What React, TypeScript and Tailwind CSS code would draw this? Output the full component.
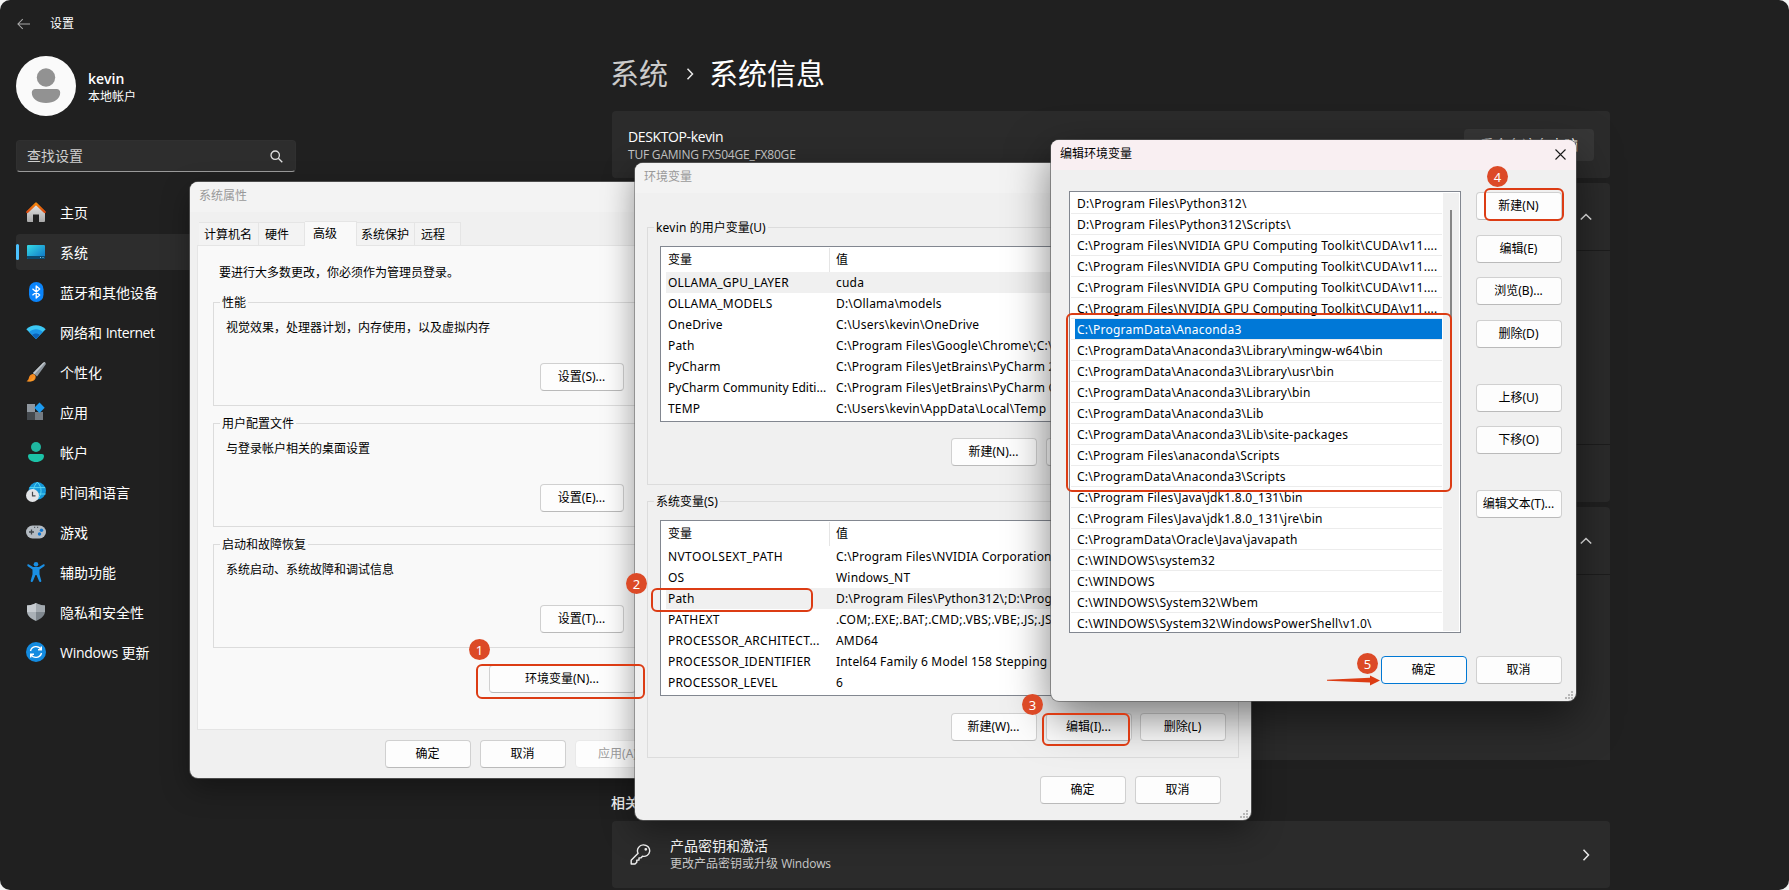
import React from 'react';

interface NavItem {
  label: React.ReactNode;
  icon: React.ReactNode;
  active?: boolean;
}

interface Variable {
  name: string;
  value: string;
  selected?: boolean;
  tracking?: string;
}

const HomeIcon = () => (
  <svg width="20" height="20" viewBox="0 0 20 20">
    <defs>
      <linearGradient id="home" x1="0" y1="0" x2="0" y2="1">
        <stop offset="0" stopColor="#e6e6e6" />
        <stop offset="1" stopColor="#a9a9a9" />
      </linearGradient>
      <linearGradient id="roof" x1="0" y1="0" x2="0" y2="1">
        <stop offset="0" stopColor="#f5870c" />
        <stop offset="1" stopColor="#d9480f" />
      </linearGradient>
    </defs>
    <path d="M1 9.5 10 1.5l9 8V19a1 1 0 0 1-1 1h-5v-7.5H7V20H2a1 1 0 0 1-1-1z" fill="url(#home)" />
    <path d="M1.300 10 10 1.600l8.700 8.400" fill="none" stroke="url(#roof)" strokeWidth="2.400" strokeLinecap="round" strokeLinejoin="round" />
  </svg>
);

const SystemIcon = () => (
  <svg width="20" height="20" viewBox="0 0 20 20">
    <defs>
      <linearGradient id="sys" x1="0" y1="0" x2="1" y2="1">
        <stop offset="0" stopColor="#35dbe6" />
        <stop offset="1" stopColor="#0d6fc4" />
      </linearGradient>
    </defs>
    <rect x="1" y="3" width="18" height="14" rx="1" fill="url(#sys)" />
    <path d="M1 14h18v2a1 1 0 0 1-1 1H2a1 1 0 0 1-1-1z" fill="#0b4a6f" />
    <path d="M14 15.5h1M16.5 15.5h1" stroke="#7cc9ee" />
  </svg>
);

const BluetoothIcon = () => (
  <svg width="20" height="20" viewBox="0 0 20 20">
    <rect x="3" y="0" width="14.5" height="20" rx="7.2" fill="#0a84fa" />
    <path d="m6.5 6.8 7.2 6.2L10.2 16V4l3.5 3-7.2 6.2" fill="none" stroke="#fff" strokeWidth="1.3" strokeLinejoin="round" />
  </svg>
);

const NetworkIcon = () => (
  <svg width="20" height="20" viewBox="0 0 20 20">
    <path d="M0.3 7.3C5.6 1.9 14.4 1.9 19.7 7.3L10 17z" fill="#3cc8f4" />
    <path d="M3.2 10.1C7 6.4 13 6.4 16.8 10.1L10 17z" fill="#1b93e6" />
    <path d="M6.1 13.1C8.3 11.1 11.7 11.1 13.9 13.1L10 17z" fill="#0c62b8" />
  </svg>
);

const BrushIcon = () => (
  <svg width="20" height="20" viewBox="0 0 20 20">
    <path d="M19.2.5c1 .8.6 1.8.1 2.6L11 14.4 7 11 16.9 1C17.6.3 18.5 0 19.2.5z" fill="#8d969e" />
    <path d="M16.9 1C17.6.3 18.5 0 19.2.5L8.4 12.2 7 11z" fill="#c3c9cd" />
    <path d="M6 12.2c1.700-.7 3.600.7 3.700 2.600C9.800 18.500 5.500 20.500.500 19.200c1.700-.9 2-2 2.500-3.700.4-1.500 1.300-2.700 3-3.300z" fill="#f58a1f" />
    <path d="M.5 19.200c3-.2 5.500-1 8.400-6-.1 5-3.900 7.300-8.400 6z" fill="#fbb03b" opacity=".5" />
  </svg>
);

const AppsIcon = () => (
  <svg width="20" height="20" viewBox="0 0 20 20">
    <rect x="1" y="2" width="8" height="8" fill="#8f979f" />
    <rect x="1" y="10" width="8" height="8" fill="#43484d" />
    <rect x="9" y="10" width="8" height="8" fill="#747b82" />
    <path d="m13.500.500 5.200 5.200-5.200 5.200-5.200-5.200z" fill="#1c9bf0" />
  </svg>
);

const AccountIcon = () => (
  <svg width="20" height="20" viewBox="0 0 20 20">
    <circle cx="10" cy="5" r="5" fill="#1fb7a0" />
    <path d="M4 12h12a2 2 0 0 1 2 2c0 3.500-3.500 6-8 6s-8-2.500-8-6a2 2 0 0 1 2-2z" fill="#1cc3a8" />
  </svg>
);

const TimeIcon = () => (
  <svg width="20" height="20" viewBox="0 0 20 20">
    <circle cx="11.300" cy="8.800" r="8.700" fill="#1597d8" />
    <path d="M11.300.100c-5 5-5 12.400 0 17.400M11.300.100c5 5 5 12.400 0 17.400M3.500 5.600h15.600M3 12h16.500" fill="none" stroke="#58d6f2" strokeWidth="1" />
    <circle cx="6.500" cy="13.500" r="6.500" fill="#e3e5e7" />
    <path d="M6.500 9.800v4h3" fill="none" stroke="#44494d" strokeWidth="1.200" />
  </svg>
);

const GamingIcon = () => (
  <svg width="20" height="20" viewBox="0 0 20 20">
    <rect x="0" y="3.500" width="20" height="13" rx="6.500" fill="#b4bbc2" />
    <path d="M5.500 7.500v5M3 10h5" stroke="#3f454b" strokeWidth="1.300" />
    <circle cx="15.500" cy="8.300" r="1.700" fill="#1076d0" />
    <circle cx="13.500" cy="12" r="1.700" fill="#1076d0" />
    <path d="M8 5.300h1.200M11 5.300h1.200" stroke="#3f454b" />
  </svg>
);

const AccessibilityIcon = () => (
  <svg width="20" height="20" viewBox="0 0 20 20" fill="#1a8fe3">
    <circle cx="10" cy="2.300" r="2.300" />
    <path d="M2.600 2.300 7 5h6l4.400-2.700c1.300-.4 1.700 1.200.8 1.900L13.500 7.500v4.700l1.800 6.600c.2 1.400-1.600 1.700-2.200.4L10.500 13h-1l-2.600 6.200c-.6 1.300-2.400 1-2.200-.4l1.800-6.600V7.500L1.800 4.200C.900 3.500 1.300 1.900 2.600 2.300z" />
  </svg>
);

const ShieldIcon = () => (
  <svg width="20" height="20" viewBox="0 0 20 20">
    <path d="M10 1c2.500 1.700 5.500 2.400 9 2.500v5.800c0 4.200-3.400 7.500-9 9.700z" fill="#7f878e" />
    <path d="M10 1C7.500 2.700 4.500 3.400 1 3.500v5.800C1 13.500 4.400 16.800 10 19z" fill="#aab1b7" />
    <path d="M1 3.500C4.500 3.400 7.500 2.700 10 1v9H1z" fill="#c6cbd0" />
    <path d="M19 3.500C15.500 3.400 12.500 2.700 10 1v9h9z" fill="#a2a9af" />
  </svg>
);

const UpdateIcon = () => (
  <svg width="20" height="20" viewBox="0 0 20 20">
    <circle cx="10" cy="10" r="10" fill="#138be0" />
    <path d="M4.500 9A5.700 5.700 0 0 1 15 7.500M15.500 11A5.700 5.700 0 0 1 5 12.500M15.300 4.500v3.300H12M4.700 15.500v-3.300H8" fill="none" stroke="#fff" strokeWidth="1.400" />
  </svg>
);

const navItems: NavItem[] = [
  { label: '主页', icon: <HomeIcon /> },
  { label: '系统', icon: <SystemIcon />, active: true },
  { label: '蓝牙和其他设备', icon: <BluetoothIcon /> },
  { label: <>网络和 <span className="tracking-[-0.45px]">Internet</span></>, icon: <NetworkIcon /> },
  { label: '个性化', icon: <BrushIcon /> },
  { label: '应用', icon: <AppsIcon /> },
  { label: '帐户', icon: <AccountIcon /> },
  { label: '时间和语言', icon: <TimeIcon /> },
  { label: '游戏', icon: <GamingIcon /> },
  { label: '辅助功能', icon: <AccessibilityIcon /> },
  { label: '隐私和安全性', icon: <ShieldIcon /> },
  { label: <><span className="tracking-[-0.25px]">Windows</span> 更新</>, icon: <UpdateIcon /> },
];

const userVariables: Variable[] = [
  { name: 'OLLAMA_GPU_LAYER', value: 'cuda', selected: true },
  { name: 'OLLAMA_MODELS', value: 'D:\\Ollama\\models' },
  { name: 'OneDrive', value: 'C:\\Users\\kevin\\OneDrive' },
  { name: 'Path', value: 'C:\\Program Files\\Google\\Chrome\\;C:\\' },
  { name: 'PyCharm', value: 'C:\\Program Files\\JetBrains\\PyCharm 2' },
  { name: 'PyCharm Community Editi...', value: 'C:\\Program Files\\JetBrains\\PyCharm C', tracking: 'tracking-[0.03px]' },
  { name: 'TEMP', value: 'C:\\Users\\kevin\\AppData\\Local\\Temp' },
];

const systemVariables: Variable[] = [
  { name: 'NVTOOLSEXT_PATH', value: 'C:\\Program Files\\NVIDIA Corporation', tracking: 'tracking-[0.4px]' },
  { name: 'OS', value: 'Windows_NT' },
  { name: 'Path', value: 'D:\\Program Files\\Python312\\;D:\\Progr', selected: true },
  { name: 'PATHEXT', value: '.COM;.EXE;.BAT;.CMD;.VBS;.VBE;.JS;.JSE', tracking: 'tracking-[0.35px]' },
  { name: 'PROCESSOR_ARCHITECT...', value: 'AMD64', tracking: 'tracking-[0.27px]' },
  { name: 'PROCESSOR_IDENTIFIER', value: 'Intel64 Family 6 Model 158 Stepping', tracking: 'tracking-[0.28px]' },
  { name: 'PROCESSOR_LEVEL', value: '6' },
];

const paths = [
  'D:\\Program Files\\Python312\\',
  'D:\\Program Files\\Python312\\Scripts\\',
  'C:\\Program Files\\NVIDIA GPU Computing Toolkit\\CUDA\\v11....',
  'C:\\Program Files\\NVIDIA GPU Computing Toolkit\\CUDA\\v11....',
  'C:\\Program Files\\NVIDIA GPU Computing Toolkit\\CUDA\\v11....',
  'C:\\Program Files\\NVIDIA GPU Computing Toolkit\\CUDA\\v11....',
  'C:\\ProgramData\\Anaconda3',
  'C:\\ProgramData\\Anaconda3\\Library\\mingw-w64\\bin',
  'C:\\ProgramData\\Anaconda3\\Library\\usr\\bin',
  'C:\\ProgramData\\Anaconda3\\Library\\bin',
  'C:\\ProgramData\\Anaconda3\\Lib',
  'C:\\ProgramData\\Anaconda3\\Lib\\site-packages',
  'C:\\Program Files\\anaconda\\Scripts',
  'C:\\ProgramData\\Anaconda3\\Scripts',
  'C:\\Program Files\\Java\\jdk1.8.0_131\\bin',
  'C:\\Program Files\\Java\\jdk1.8.0_131\\jre\\bin',
  'C:\\ProgramData\\Oracle\\Java\\javapath',
  'C:\\WINDOWS\\system32',
  'C:\\WINDOWS',
  'C:\\WINDOWS\\System32\\Wbem',
  'C:\\WINDOWS\\System32\\WindowsPowerShell\\v1.0\\',
];
const selectedPath = 6;

interface ButtonProps {
  children?: React.ReactNode;
  className?: string;
  variant?: 'normal' | 'default' | 'disabled';
}

const Button: React.FC<ButtonProps> = ({ children, className = 'w-[86px]', variant = 'normal' }) => {
  const look = {
    normal: 'border-[#d0d0d0] border-b-[#bababa] text-black',
    default: 'border-[#0078d4] text-black',
    disabled: 'border-[#e9e9e9] text-[#9d9d9d]',
  }[variant];
  return (
    <button className={`h-7 shrink-0 rounded border bg-[#fdfdfd] pr-px text-center whitespace-nowrap ${look} ${className}`}>{children}</button>
  );
};

const Grip = () => (
  <svg className="absolute right-[3px] bottom-[2px]" width="8" height="8" viewBox="0 0 8 8" fill="#b8b8b8">
    <path d="M6 0h2v2H6zM3 3h2v2H3zM6 3h2v2H6zM0 6h2v2H0zM3 6h2v2H3zM6 6h2v2H6z" />
  </svg>
);

const Chevron = ({ className = '' }: { className?: string }) => (
  <svg className={className} width="12" height="12" viewBox="0 0 12 12" fill="none" stroke="#e8e8e8" strokeWidth="1.5">
    <path d="m3.500.800 5 5.200-5 5.200" />
  </svg>
);

const Sidebar = () => (
  <aside className="w-[610px] shrink-0 pl-4">
    <div className="flex h-12 items-center">
      <svg width="13" height="12" viewBox="0 0 14 12" fill="none" stroke="#a8a8a8" strokeWidth="1.100" className="ml-px">
        <path d="M14 6H1M6.200.700 1 6l5.200 5.300" />
      </svg>
      <span className="ml-5 text-xs text-white">设置</span>
    </div>
    <div className="mt-2 flex items-center">
      <svg width="60" height="60" viewBox="0 0 60 60">
        <circle cx="30" cy="30" r="30" fill="#fafafa" />
        <circle cx="30" cy="21.500" r="9.200" fill="#929292" />
        <path d="M19.500 33h21a3.500 3.500 0 0 1 3.700 3.700c0 6.500-6.500 10.300-14.200 10.300s-14.200-3.800-14.200-10.300A3.500 3.500 0 0 1 19.500 33z" fill="#929292" />
      </svg>
      <div className="ml-3 pt-0.5 text-white">
        <div className="text-sm leading-[18px] font-semibold">kevin</div>
        <div className="text-xs leading-[17px]">本地帐户</div>
      </div>
    </div>
    <div className="mt-6 flex h-8 w-[280px] items-center justify-between rounded border border-[#303030] border-b-[#9a9a9a] bg-[#2d2d2d] pr-3 pl-2.5">
      <span className="text-sm text-[#cfcfcf]">查找设置</span>
      <svg width="13" height="13" viewBox="0 0 13 13" fill="none" stroke="#e0e0e0" strokeWidth="1.300">
        <circle cx="5.200" cy="5.200" r="4.200" />
        <path d="m8.300 8.300 4 4" />
      </svg>
    </div>
    <nav className="mt-[22px] flex w-[280px] flex-col gap-1">
      {navItems.map((item, i) => (
        <div key={i} className={`flex h-9 items-center rounded text-sm text-white ${item.active ? 'bg-[#2d2d2d]' : ''}`}>
          <span className={`h-4 w-[3px] rounded-full ${item.active ? 'bg-[#4cc2ff]' : ''}`} />
          <span className="ml-[7px]">{item.icon}</span>
          <span className="ml-[14px] pt-0.5">{item.label}</span>
        </div>
      ))}
    </nav>
  </aside>
);

const SystemInfoPage = () => (
  <main className="w-[1000px] pt-14 text-white">
    <h1 className="flex h-9 items-center text-[29px]">
      <span className="text-[#cbcbcb]">系统</span>
      <Chevron className="mr-[13px] ml-4" />
      <span>系统信息</span>
    </h1>
    <div className="ml-0.5">
      <div className="mt-[19px] flex h-[67px] items-center justify-between rounded bg-[#2b2b2b] px-4">
        <div>
          <div className="text-sm leading-5 tracking-[-0.38px]">DESKTOP-kevin</div>
          <div className="text-xs leading-4 tracking-[-0.2px] text-[#c8c8c8]">TUF GAMING FX504GE_FX80GE</div>
        </div>
        <div className="flex h-8 w-[130px] items-center justify-center rounded bg-[#373737] text-sm">重命名这台电脑</div>
      </div>
      <div className="mt-[5px] h-[319px] rounded bg-[#2b2b2b]">
        <div className="flex h-[68px] items-center justify-end border-b border-[#1d1d1d] pr-[18px]">
          <Chevron className="-rotate-90" />
        </div>
        <div className="h-[194px] border-b border-[#1d1d1d]" />
      </div>
      <div className="mt-[5px] h-[253px] rounded-t bg-[#2b2b2b]">
        <div className="flex h-[68px] items-center justify-end border-b border-[#1d1d1d] pr-[18px]">
          <Chevron className="-rotate-90" />
        </div>
      </div>
    </div>
    <h2 className="mt-[34px] ml-px text-sm leading-[18px] font-medium">相关设置</h2>
    <div className="mt-[9px] ml-0.5 flex h-[67px] items-center rounded bg-[#2b2b2b] pr-[18px] pl-[18px]">
      <svg width="21" height="21" viewBox="0 0 21 21" fill="none" stroke="#f0f0f0" strokeWidth="1.400" strokeLinejoin="round">
        <path d="M14.200 1a5.700 5.700 0 1 1-1.700 11.200l-1.600 1.700H9v2.200H6.800v2.200L5 20H1.200v-3.700l6.900-7A5.800 5.800 0 0 1 14.200 1z" />
        <circle cx="15.800" cy="5.300" r=".7" fill="#f0f0f0" />
      </svg>
      <div className="ml-[19px] flex-1 pt-px">
        <div className="text-sm leading-[18px]">产品密钥和激活</div>
        <div className="text-xs leading-[18px] text-[#c8c8c8]">更改产品密钥或升级 <span className="tracking-[-0.2px]">Windows</span></div>
      </div>
      <Chevron />
    </div>
  </main>
);

interface SettingsGroupProps {
  title: string;
  text: string;
  button: string;
}

const SettingsGroup: React.FC<SettingsGroupProps> = ({ title, text, button }) => (
  <fieldset className="mb-2 ml-[15px] h-[113px] w-[432px] border border-[#dcdcdc]">
    <legend className="ml-1.5 h-[18px] px-[2px] leading-5">{title}</legend>
    <p className="mt-2 ml-3 leading-[18px]">{text}</p>
    <div className="mt-[26px] mr-5 flex justify-end">
      <Button className="w-[84px]">{button}</Button>
    </div>
  </fieldset>
);

const Tab = ({ label, className }: { label: string; className: string }) => (
  <div className={`h-[23px] border border-b-0 border-l-0 border-[#e5e5e5] bg-[#f3f3f3] leading-[23px] ${className}`}>{label}</div>
);

const SystemProperties = () => (
  <section className="absolute top-[182px] left-[190px] h-[596px] w-[480px] overflow-hidden rounded-lg bg-[#f0f0f0] shadow-[0_0_0_1px_rgba(110,110,110,0.6),0_10px_28px_rgba(0,0,0,0.35)]">
    <div className="h-[30px] bg-[#f3f3f3] pl-[9px] leading-7 text-[#999999]">系统属性</div>
    <div className="mt-[9px] flex h-6 items-end pl-[9px]">
      <Tab label="计算机名" className="w-[60px] border-l pl-[5px]" />
      <Tab label="硬件" className="w-[46px] pl-[6px]" />
      <div className="relative z-10 -mb-px h-[25px] w-[52px] border border-b-0 border-l-0 border-[#e5e5e5] bg-[#f9f9f9] pl-[8px] leading-[23px]">高级</div>
      <Tab label="系统保护" className="w-[58px] pl-[4px]" />
      <Tab label="远程" className="w-[46px] pl-[6px]" />
    </div>
    <div className="ml-[7px] h-[485px] border border-[#e5e5e5] bg-[#f9f9f9]">
      <p className="mt-[18px] mb-[11px] ml-[21px] leading-[18px]">要进行大多数更改，你必须作为管理员登录。</p>
      <SettingsGroup title="性能" text="视觉效果，处理器计划，内存使用，以及虚拟内存" button="设置(S)..." />
      <SettingsGroup title="用户配置文件" text="与登录帐户相关的桌面设置" button="设置(E)..." />
      <SettingsGroup title="启动和故障恢复" text="系统启动、系统故障和调试信息" button="设置(T)..." />
      <Button className="mt-[9px] ml-[291px] w-[147px]">环境变量(N)...</Button>
    </div>
    <div className="mt-[10px] ml-[195px] flex gap-[9px]">
      <Button>确定</Button>
      <Button>取消</Button>
      <Button variant="disabled" className="w-[86px] pr-1">应用(A)</Button>
    </div>
  </section>
);

const VariableTable = ({ variables }: { variables: Variable[] }) => (
  <div className="mt-[10px] ml-3 h-44 w-[566px] overflow-hidden border border-[#828790] bg-white">
    <div className="flex h-[25px] pt-px">
      <span className="w-[169px] border-r border-[#e5e5e5] pl-[7px] leading-6">变量</span>
      <span className="pl-[6px] leading-6">值</span>
    </div>
    {variables.map((v) => (
      <div key={v.name} className={`ml-[5px] flex h-[21px] pl-[2px] leading-[21px] whitespace-nowrap ${v.selected ? 'bg-[#f0f0f0]' : ''}`}>
        <span className={`w-[168px] shrink-0 ${v.tracking ?? 'tracking-[0.19px]'}`}>{v.name}</span>
        <span className={v.name === 'PATHEXT' ? 'tracking-[0.29px]' : 'tracking-[0.19px]'}>{v.value}</span>
      </div>
    ))}
  </div>
);

const EnvironmentVariables = () => (
  <section className="absolute top-[163px] left-[635px] h-[657px] w-[616px] overflow-hidden rounded-lg bg-[#f0f0f0] shadow-[0_0_0_1px_rgba(110,110,110,0.6),0_10px_32px_rgba(0,0,0,0.4)]">
    <div className="h-[30px] bg-[#f3f3f3] pl-[9px] leading-7 text-[#999999]">环境变量</div>
    <fieldset className="mt-[25px] ml-3 h-[267px] w-[592px] border border-[#dcdcdc]">
      <legend className="ml-1.5 h-[18px] px-[2px] leading-5"><span className="tracking-[0.2px]">kevin</span> 的用户变量(U)</legend>
      <VariableTable variables={userVariables} />
      <div className="mt-4 ml-[303px] flex gap-[9px]">
        <Button>新建(N)...</Button>
        <Button />
      </div>
    </fieldset>
    <fieldset className="mt-[7px] ml-3 h-[266px] w-[592px] border border-[#dcdcdc]">
      <legend className="ml-1.5 h-[18px] px-[2px] leading-5">系统变量(S)</legend>
      <VariableTable variables={systemVariables} />
      <div className="mt-[17px] ml-[303px] flex gap-[9px]">
        <Button>新建(W)...</Button>
        <Button>编辑(I)...</Button>
        <Button className="-ml-px w-[86px]">删除(L)</Button>
      </div>
    </fieldset>
    <div className="mt-[18px] mr-[30px] flex justify-end gap-[9px]">
      <Button>确定</Button>
      <Button>取消</Button>
    </div>
    <Grip />
  </section>
);

const EditVariable = () => (
  <section className="absolute top-[140px] left-[1051px] h-[561px] w-[525px] overflow-hidden rounded-lg bg-[#f0f0f0] shadow-[0_0_0_1px_rgba(90,90,90,0.6),0_16px_44px_rgba(0,0,0,0.5)]">
    <div className="flex h-[30px] items-center justify-between bg-[#f9eff2] pr-[10px] pb-0.5 pl-[9px]">
      <span>编辑环境变量</span>
      <svg width="11" height="11" viewBox="0 0 11 11" stroke="#1a1a1a" strokeWidth="1.100">
        <path d="m.500.500 10 10M10.500.500l-10 10" />
      </svg>
    </div>
    <div className="mt-[21px] ml-[18px] flex">
      <div className="flex h-[442px] w-[392px] overflow-hidden border border-[#828790] bg-white p-px">
        <div className="w-[371px] shrink-0">
          {paths.map((path, i) => (
            <div key={i} className="h-[21px] border-b border-[#ececec] pl-1 leading-[22px] tracking-[0.24px] whitespace-nowrap">
              <div className={`h-5 pl-[2px] ${i === selectedPath ? 'bg-[#0078d7] text-white' : ''}`}>{path}</div>
            </div>
          ))}
        </div>
        <div className="ml-px w-4 bg-[#f0f0f0] pt-[17px] pl-[7px]">
          <div className="h-[270px] w-[2px] bg-[#868686]" />
        </div>
      </div>
      <div className="mt-px ml-[15px] flex flex-col">
        <Button>新建(N)</Button>
        <Button className="mt-[15px] w-[86px]">编辑(E)</Button>
        <Button className="mt-[14px] w-[86px]">浏览(B)...</Button>
        <Button className="mt-[15px] w-[86px]">删除(D)</Button>
        <Button className="mt-[36px] w-[86px]">上移(U)</Button>
        <Button className="mt-[14px] w-[86px]">下移(O)</Button>
        <Button className="mt-[36px] w-[86px]">编辑文本(T)...</Button>
      </div>
    </div>
    <div className="mt-[23px] mr-[14px] flex justify-end gap-[9px]">
      <Button variant="default">确定</Button>
      <Button>取消</Button>
    </div>
    <Grip />
  </section>
);

const Outline = ({ className }: { className: string }) => (
  <div className={`absolute rounded-md border-2 border-[#dc3c14] ${className}`} />
);

const Step = ({ n, className }: { n: number; className: string }) => (
  <div className={`absolute h-[21px] w-[21px] rounded-full bg-[#dc4a27] pt-px text-center text-[13px] leading-[21px] text-white ${className}`}>{n}</div>
);

// Numbered steps drawn over the windows
const Annotations = () => (
  <>
    <Outline className="top-[664px] left-[476px] h-[35px] w-[169px]" />
    <Outline className="top-[588px] left-[651px] h-[24px] w-[162px]" />
    <Outline className="top-[713px] left-[1042px] h-[33px] w-[88px]" />
    <Outline className="top-[188px] left-[1484px] h-[33px] w-[80px]" />
    <Outline className="top-[313px] left-[1066px] h-[179px] w-[386px]" />
    <Step n={1} className="top-[639px] left-[469px]" />
    <Step n={2} className="top-[573px] left-[626px]" />
    <Step n={3} className="top-[694px] left-[1022px]" />
    <Step n={4} className="top-[166px] left-[1487px]" />
    <Step n={5} className="top-[653px] left-[1357px]" />
    <svg className="absolute top-[675px] left-[1327px]" width="53" height="11" viewBox="0 0 53 11" fill="#dc3c14">
      <path d="M0 4.700 43 2.700V.500l10 5L43 10.500V7.500L0 5.700z" />
    </svg>
  </>
);

const App: React.FC = () => {
  return (
    <div className="h-[890px] w-[1789px] overflow-hidden bg-[#f4f4f4]">
      <div className="relative flex h-full overflow-hidden rounded-[10px] bg-[#202020] font-['Open_Sans','Noto_Sans_CJK_SC',sans-serif]">
        <Sidebar />
        <SystemInfoPage />
        <div className="font-['Noto_Sans','Noto_Sans_CJK_SC',sans-serif] text-xs text-black">
          <SystemProperties />
          <EnvironmentVariables />
          <EditVariable />
          <Annotations />
        </div>
      </div>
    </div>
  );
};

export default App;
